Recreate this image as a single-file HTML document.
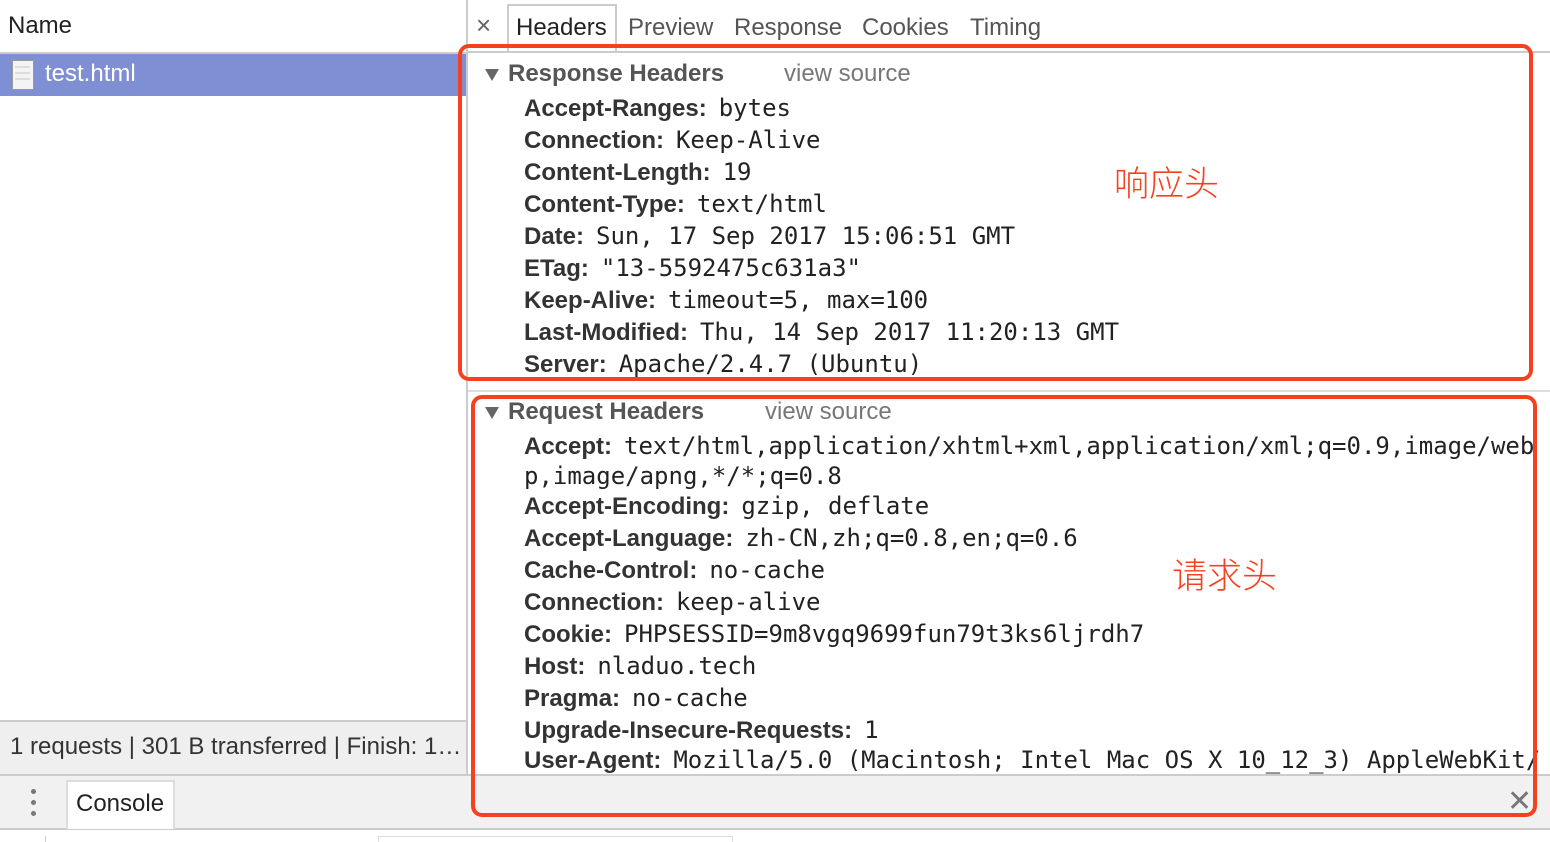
<!DOCTYPE html>
<html><head><meta charset="utf-8"><style>
*{margin:0;padding:0;box-sizing:border-box}
body{width:1550px;height:842px;position:relative;overflow:hidden;background:#fff;font-family:"Liberation Sans",Arial,sans-serif;color:#333}
.a{position:absolute;white-space:pre}
.l{position:absolute;left:524px;height:32px;line-height:32px;white-space:pre;font-size:24px;font-weight:bold;color:#333}
.l span{font-family:"DejaVu Sans Mono","Liberation Mono",monospace;font-weight:normal;color:#222;font-size:24px;margin-left:12px}
.l span.n{margin-left:0}
.red{position:absolute;border:4px solid #f5411f;border-radius:11px}
.cn{position:absolute;font-family:"Noto Sans CJK SC",sans-serif;font-size:35px;color:#f5411f;font-weight:300;line-height:40px}
.tri{position:absolute;width:0;height:0;border-left:7px solid transparent;border-right:7px solid transparent;border-top:12px solid #666}
</style></head><body>
<div class="a" style="left:8px;top:12px;font-size:24px;color:#222">Name</div>
<div class="a" style="left:0;top:52px;width:466px;height:2px;background:#ccc"></div>
<div class="a" style="left:0;top:54px;width:466px;height:42px;background:#7f8fd3"></div>
<div class="a" style="left:12px;top:60px;width:22px;height:30px;background:#f4f4f4;border:1px solid #999"></div>
<div class="a" style="left:15px;top:66px;width:15px;height:2px;background:#ddd"></div>
<div class="a" style="left:15px;top:72px;width:15px;height:2px;background:#ddd"></div>
<div class="a" style="left:15px;top:78px;width:15px;height:2px;background:#ddd"></div>
<div class="a" style="left:45px;top:60px;font-size:24px;color:#fff;line-height:28px">test.html</div>
<div class="a" style="left:466px;top:0;width:2px;height:775px;background:#ccc"></div>
<div class="a" style="left:0;top:720px;width:466px;height:55px;background:#efefef;border-top:2px solid #ccc"></div>
<div class="a" style="left:10px;top:733px;font-size:24px;color:#333">1 requests | 301 B transferred | Finish: 1…</div>
<div class="a" style="left:0;top:774px;width:1550px;height:56px;background:#f1f1f1;border-top:2px solid #ccc;border-bottom:2px solid #ccc"></div>
<div class="a" style="left:31px;top:789px;width:5px;height:5px;border-radius:3px;background:#777"></div>
<div class="a" style="left:31px;top:800px;width:5px;height:5px;border-radius:3px;background:#777"></div>
<div class="a" style="left:31px;top:811px;width:5px;height:5px;border-radius:3px;background:#777"></div>
<div class="a" style="left:66px;top:780px;width:109px;height:49px;background:#fff;border:2px solid #ddd;border-bottom:none"></div>
<div class="a" style="left:76px;top:790px;font-size:24px;color:#222">Console</div>
<div class="a" style="left:1507px;top:786px;font-size:30px;color:#777;line-height:32px">✕</div>
<div class="a" style="left:45px;top:836px;width:1px;height:6px;background:#ccc"></div>
<div class="a" style="left:378px;top:836px;width:355px;height:6px;border:1px solid #ddd;border-bottom:none"></div>
<div class="a" style="left:476px;top:10px;font-size:26px;color:#666">×</div>
<div class="a" style="left:507px;top:4px;width:110px;height:48px;border:2px solid #ccc;border-bottom:none;background:#fff"></div>
<div class="a" style="left:516px;top:14px;font-size:24px;color:#222">Headers</div>
<div class="a" style="left:628px;top:14px;font-size:24px;color:#555">Preview</div>
<div class="a" style="left:734px;top:14px;font-size:24px;color:#555">Response</div>
<div class="a" style="left:862px;top:14px;font-size:24px;color:#555">Cookies</div>
<div class="a" style="left:970px;top:14px;font-size:24px;color:#555">Timing</div>
<div class="a" style="left:468px;top:51px;width:1082px;height:2px;background:#ccc"></div>
<div class="a" style="left:468px;top:390px;width:1082px;height:2px;background:#ddd"></div>
<div class="tri" style="left:485px;top:69px"></div>
<div class="a" style="left:508px;top:60px;font-size:24px;font-weight:bold;color:#555;line-height:28px">Response Headers</div>
<div class="a" style="left:784px;top:60px;font-size:24px;color:#777;line-height:28px">view source</div>
<div class="l" style="top:92px">Accept-Ranges:<span>bytes</span></div>
<div class="l" style="top:124px">Connection:<span>Keep-Alive</span></div>
<div class="l" style="top:156px">Content-Length:<span>19</span></div>
<div class="l" style="top:188px">Content-Type:<span>text/html</span></div>
<div class="l" style="top:220px">Date:<span>Sun, 17 Sep 2017 15:06:51 GMT</span></div>
<div class="l" style="top:252px">ETag:<span>"13-5592475c631a3"</span></div>
<div class="l" style="top:284px">Keep-Alive:<span>timeout=5, max=100</span></div>
<div class="l" style="top:316px">Last-Modified:<span>Thu, 14 Sep 2017 11:20:13 GMT</span></div>
<div class="l" style="top:348px">Server:<span>Apache/2.4.7 (Ubuntu)</span></div>
<div class="tri" style="left:485px;top:407px"></div>
<div class="a" style="left:508px;top:398px;font-size:24px;font-weight:bold;color:#555;line-height:28px">Request Headers</div>
<div class="a" style="left:765px;top:398px;font-size:24px;color:#777;line-height:28px">view source</div>
<div class="l" style="top:430px">Accept:<span>text/html,application/xhtml+xml,application/xml;q=0.9,image/web</span></div>
<div class="l" style="top:460px"><span class="n">p,image/apng,*/*;q=0.8</span></div>
<div class="l" style="top:490px">Accept-Encoding:<span>gzip, deflate</span></div>
<div class="l" style="top:522px">Accept-Language:<span>zh-CN,zh;q=0.8,en;q=0.6</span></div>
<div class="l" style="top:554px">Cache-Control:<span>no-cache</span></div>
<div class="l" style="top:586px">Connection:<span>keep-alive</span></div>
<div class="l" style="top:618px">Cookie:<span>PHPSESSID=9m8vgq9699fun79t3ks6ljrdh7</span></div>
<div class="l" style="top:650px">Host:<span>nladuo.tech</span></div>
<div class="l" style="top:682px">Pragma:<span>no-cache</span></div>
<div class="l" style="top:714px">Upgrade-Insecure-Requests:<span>1</span></div>
<div class="a" style="left:468px;top:745px;width:1082px;height:30px;overflow:hidden"><div class="l" style="left:56px;top:-1px">User-Agent:<span>Mozilla/5.0 (Macintosh; Intel Mac OS X 10_12_3) AppleWebKit/</span></div></div>
<div class="red" style="left:458px;top:44px;width:1075px;height:337px"></div>
<div class="red" style="left:471px;top:395px;width:1066px;height:422px"></div>
<div class="cn" style="left:1114px;top:162px">响应头</div>
<div class="cn" style="left:1172px;top:554px">请求头</div>
</body></html>
